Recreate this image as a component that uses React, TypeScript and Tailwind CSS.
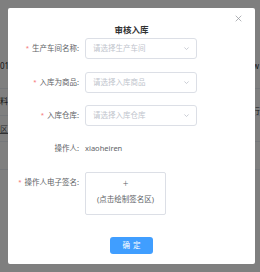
import React from "react";

const Chevron = () => (
    <svg width="7" height="7" viewBox="0 0 10 10" fill="none" stroke="#c0c4cc" strokeWidth="1.2">
        <path d="M2 3.5 L5 6.5 L8 3.5"/>
    </svg>
);

const SelectRow = ({label, placeholder, top}: { label: string, placeholder: string, top: string }) => (
    <div className={`flex items-center ${top}`}>
        <div className="w-[77px] pr-[6px] flex justify-end items-center text-[7.5px] text-[#606266]">
            <span className="text-[#f56c6c] mr-[3px] text-[6px]">*</span>
            {label}
        </div>
        <div className="w-[112px] h-[21px] border border-[#dcdfe6] rounded-[3px] flex items-center justify-between pl-[7px] pr-[6px]">
            <span className="text-[7.5px] text-[#c0c4cc]">{placeholder}</span>
            <Chevron/>
        </div>
    </div>
);

const App = () => {
    return (
        <div className="relative w-[260px] h-[272px] overflow-hidden bg-white"
             style={{fontFamily: '"Noto Sans", "Noto Sans CJK SC", sans-serif'}}>

            {/* page behind the dialog */}
            <div className="pt-[60px] text-[8px] text-[#303133]">
                <div className="h-[29px] flex justify-between items-start border-b border-[#ebeef5]">
                    <span>01</span>
                    <span className="pr-[1px]">w</span>
                </div>
                <div className="h-[27px] flex justify-between items-start border-b border-[#ebeef5] pt-[6px]">
                    <span>料:</span>
                    <span className="pt-[10px]">行</span>
                </div>
                <div className="h-[26px] flex items-center border-b border-[#ebeef5]">
                    <span className="underline text-[#606266]">区</span>
                </div>
                <div className="h-[28px] border-b border-[#ebeef5]"/>
                <div className="h-[64px]"/>
                <div className="flex pl-[42px] gap-[17px]">
                    <div className="w-[36px] h-[16px] border border-[#dcdfe6] rounded-[3px] bg-white"/>
                    <div className="w-[51px] h-[16px] rounded-[3px] bg-[#409eff]"/>
                    <div className="w-[59px] h-[16px] border border-[#fbc4c4] rounded-[3px] bg-[#fef0f0]"/>
                </div>
            </div>

            {/* overlay */}
            <div className="absolute inset-0 bg-black/50"/>

            {/* dialog */}
            <div className="absolute left-[8px] top-[8px] w-[247px] h-[256px] bg-white rounded-[2px] flex flex-col">
                <svg className="absolute right-[13px] top-[7px]" width="7" height="7" viewBox="0 0 10 10"
                     stroke="#909399" strokeWidth="1">
                    <path d="M1 1 L9 9 M9 1 L1 9"/>
                </svg>

                <div className="pt-[16px] h-[28px] text-center text-[8.5px] leading-[12px] font-bold text-[#303133]">
                    审核入库
                </div>

                <SelectRow label="生产车间名称:" placeholder="请选择生产车间" top="mt-[2px]"/>
                <SelectRow label="入库为商品:" placeholder="请选择入库商品" top="mt-[13px]"/>
                <SelectRow label="入库仓库:" placeholder="请选择入库仓库" top="mt-[12px]"/>

                <div className="flex items-center mt-[12px] h-[21px]">
                    <div className="w-[77px] pr-[6px] text-right text-[7.5px] text-[#606266]">操作人:</div>
                    <span className="text-[7.5px] text-[#606266]">xiaoheiren</span>
                </div>

                <div className="flex items-start mt-[13px]">
                    <div className="w-[77px] pr-[6px] h-[21px] flex justify-end items-center text-[7.5px] text-[#606266]">
                        <span className="text-[#f56c6c] mr-[3px] text-[6px]">*</span>
                        操作人电子签名:
                    </div>
                    <div className="w-[81px] h-[43px] border border-[#dcdfe6] rounded-[2px] flex flex-col items-center pt-[3px]">
                        <span className="text-[10px] leading-[14px] text-[#606266] font-light">+</span>
                        <span className="text-[7.5px] leading-[12px] mt-[3px] text-[#606266]">(点击绘制签名区)</span>
                    </div>
                </div>

                <div className="flex justify-center mt-[22px]">
                    <button
                        className="w-[43px] h-[17px] rounded-[3px] bg-[#409eff] text-white text-[7.5px] tracking-[3px] pl-[3px]">
                        确定
                    </button>
                </div>
            </div>
        </div>
    );
};

export default App;
